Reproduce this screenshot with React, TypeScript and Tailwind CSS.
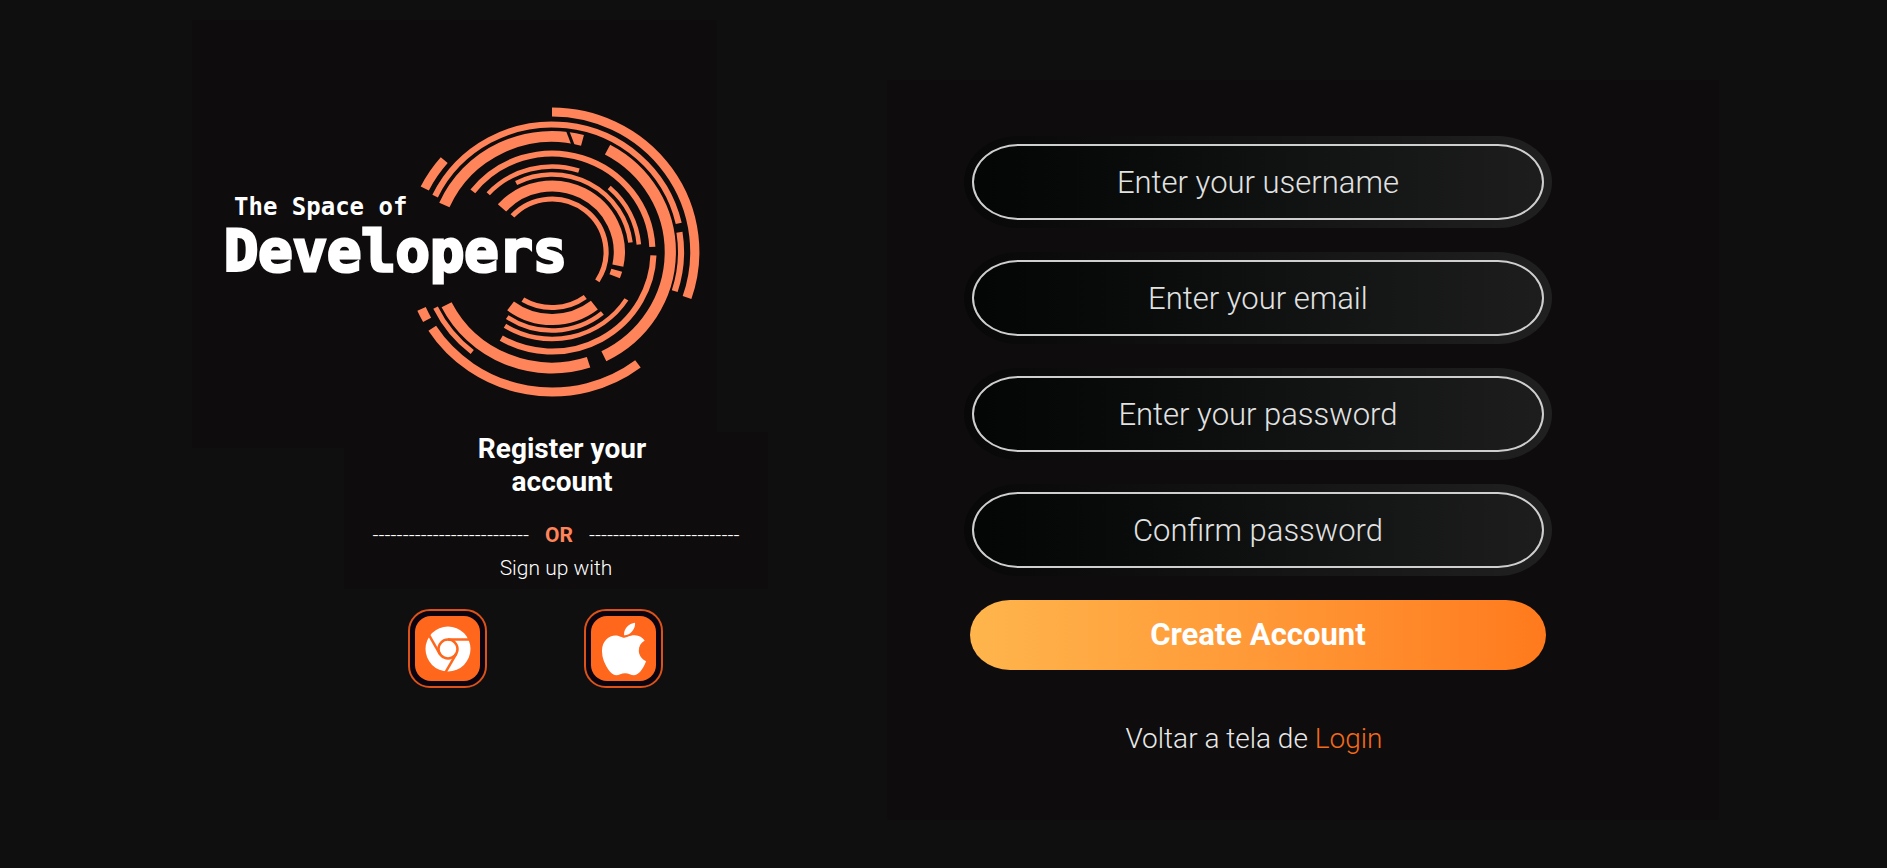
import { FaApple } from "react-icons/fa";

// [radius, stroke width, start angle, end angle], clockwise from 3 o'clock
const arcs: [number, number, number, number][] = [
  [140, 9, -90, 19],
  [140, 9, 207, 221],
  [140, 9, 53, 147],
  [140, 9, 151, 156],
  [127.5, 6, 206, 347],
  [126.5, 6, 351, 378],
  [127, 5, 128, 154],
  [115.5, 11, 204, 285],
  [116, 11, -62, 64],
  [116, 11, 72, 153],
  [98.5, 6, 218, 357],
  [99.5, 6, 2, 120],
  [85.5, 4.5, 223, 288],
  [85.5, 4.5, -49, -5],
  [87, 4.5, 33, 122],
  [77.5, 4.5, 243, 353],
  [78.5, 4.5, 51, 124],
  [66, 11, 222, 372],
  [66, 11, 16, 21.5],
  [67.5, 11, 52, 127],
  [53, 5, 223, 393],
  [55.5, 5, 54, 121],
];

function arcPath(r: number, from: number, to: number) {
  const a = (from * Math.PI) / 180;
  const b = (to * Math.PI) / 180;
  const large = to - from > 180 ? 1 : 0;
  return `M${r * Math.cos(a)} ${r * Math.sin(a)}A${r} ${r} 0 ${large} 1 ${r * Math.cos(b)} ${r * Math.sin(b)}`;
}

function Rings() {
  return (
    <svg viewBox="-148 -145 296 290" className="h-[290px] w-[296px] shrink-0" aria-hidden="true">
      <g transform="scale(1.02 1)" fill="none" stroke="#ff845a">
        {arcs.map(([r, w, from, to], i) => (
          <path key={i} d={arcPath(r, from, to)} strokeWidth={w} />
        ))}
        <path d="M15 -122L21 -106" stroke="#0e0c0d" strokeWidth={3} />
      </g>
    </svg>
  );
}

function Logo() {
  return (
    <div className="relative flex w-[476px] justify-end">
      <Rings />
      <div className="absolute top-[84px] left-0 text-white">
        <p className="pl-[10px] font-['DejaVu_Sans_Mono',monospace] text-[24px] leading-[32px] font-bold">
          The Space of
        </p>
        <h1 className="font-['DejaVu_Sans_Mono',monospace] text-[57px] leading-[56px] font-bold [-webkit-text-stroke:3px_white]">
          Developers
        </h1>
      </div>
    </div>
  );
}

function ChromeMark() {
  return (
    <svg viewBox="-23 -23 46 46" className="size-[46px]" aria-hidden="true">
      <circle r="22.5" fill="#fff" />
      <g fill="none" stroke="#ff671c" strokeWidth="2.5">
        <circle r="9.5" />
        <path d="M0 -9.5H24" />
        <path d="M0 -9.5H24" transform="rotate(120)" />
        <path d="M0 -9.5H24" transform="rotate(240)" />
      </g>
    </svg>
  );
}

function SocialButton({ label, children }: { label: string; children: React.ReactNode }) {
  return (
    <button
      type="button"
      aria-label={label}
      className="size-[79px] rounded-[22px] border-2 border-[#dd5219] bg-[#0b0410] p-[5px]"
    >
      <span className="flex h-full items-center justify-center rounded-2xl bg-[#ff671c] text-white">
        {children}
      </span>
    </button>
  );
}

const fields = [
  { id: "username", type: "text", label: "Enter your username" },
  { id: "email", type: "email", label: "Enter your email" },
  { id: "password", type: "password", label: "Enter your password" },
  { id: "confirm", type: "password", label: "Confirm password" },
];

export default function App() {
  return (
    <main className="grid min-h-screen grid-cols-[47fr_53fr] bg-[#0f0f0f] font-['Roboto',sans-serif] text-white">
      {/* BRAND */}
      <section className="pt-5 pl-[192px]">
        <div className="w-[525px] bg-[#0e0c0d] pt-[87px] pb-[51px] pl-8">
          <Logo />
        </div>

        <div className="-mt-4 ml-[152px] w-[424px]">
          <div className="flex flex-col items-center bg-[#0e0c0d] pb-1">
            <h2 className="ml-3 w-[180px] text-center text-[28px] leading-[33px] font-bold">
              Register your account
            </h2>

            <div className="mt-[21px] flex items-center gap-4 text-[21px] leading-[32px] whitespace-nowrap">
              <span className="font-light">--------------------------</span>
              <span className="font-bold text-[#ff845a]">OR</span>
              <span className="font-light">-------------------------</span>
            </div>
            <p className="text-[21px] leading-[34px] font-light">Sign up with</p>
          </div>

          <div className="mt-5 ml-16 flex gap-[97px]">
            <SocialButton label="Sign up with Google Chrome">
              <ChromeMark />
            </SocialButton>
            <SocialButton label="Sign up with Apple">
              <FaApple className="size-[60px]" />
            </SocialButton>
          </div>
        </div>
      </section>

      {/* FORM */}
      <section className="mt-20 mr-[168px] mb-12 bg-[#0e0c0d] pt-14 pr-[90px]">
        <form className="mx-auto flex w-[588px] flex-col items-center" onSubmit={(e) => e.preventDefault()}>
          <div className="flex w-full flex-col gap-6">
            {fields.map((f) => (
              <div key={f.id} className="rounded-[54px/46px] bg-linear-to-r from-[#080808] to-[#202020] p-2">
                <input
                  id={f.id}
                  type={f.type}
                  placeholder={f.label}
                  aria-label={f.label}
                  className="block h-[76px] w-full rounded-[46px/38px] border-2 border-[#d0cfcf] bg-linear-to-r from-[#040606] to-[#1d1d1d] text-center text-[31px] font-light text-white outline-none placeholder:text-[#e2e2e2]"
                />
              </div>
            ))}
          </div>

          <button
            type="submit"
            className="mt-6 h-[70px] w-[576px] rounded-[40px/35px] bg-linear-to-r from-[#ffb54c] to-[#ff7a1c] text-[31px] font-bold text-white"
          >
            Create Account
          </button>

          <p className="mt-[49px] mr-2 text-[28px] leading-[40px] font-light text-[#e8e8e8]">
            Voltar a tela de{" "}
            <a href="#login" className="text-[#f26a1b]">
              Login
            </a>
          </p>
        </form>
      </section>
    </main>
  );
}
